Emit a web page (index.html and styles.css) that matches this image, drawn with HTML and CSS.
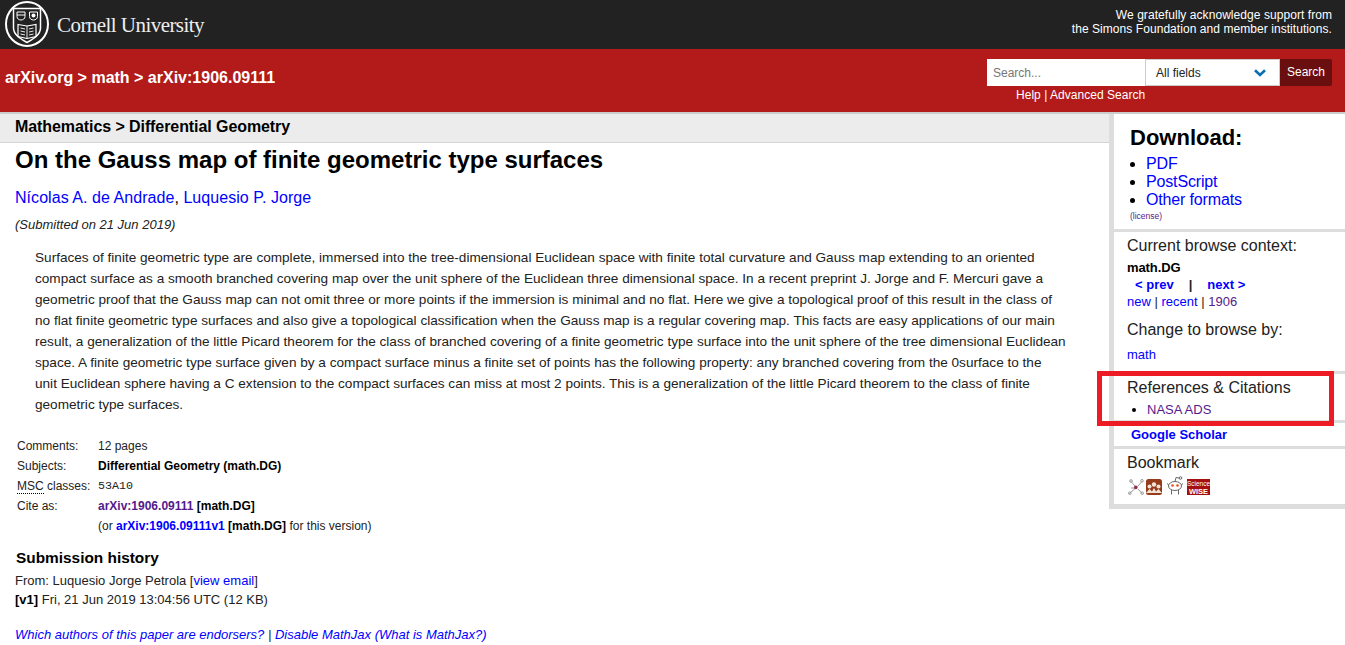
FILE: index.html
```html
<!DOCTYPE html>
<html lang="en">
<head>
<meta charset="utf-8">
<title>On the Gauss map of finite geometric type surfaces</title>
<link rel="stylesheet" href="styles.css">
</head>
<body>
<header class="cu-bar">
  <div class="cu-brand">
    <svg class="seal" width="44" height="46" viewBox="0 0 44 46" fill="none" stroke="#fff">
      <ellipse cx="22" cy="23" rx="21" ry="22" stroke-width="2"/>
      <path d="M8.500 7.500H35.500V27C35.500 34 28 38 22 41.500C16 38 8.500 34 8.500 27Z" stroke-width="1.500"/>
      <path d="M12 11H20V15.500C20 17.800 18 19 16 19C14 19 12 17.800 12 15.500ZM12 14H20" stroke-width="1"/>
      <path d="M24.500 11H32.500V15.500C32.500 17.800 30.500 19 28.500 19C26.500 19 24.500 17.800 24.500 15.500Z" stroke-width="1"/>
      <circle cx="28.500" cy="14.500" r="2" fill="#fff" stroke="none"/>
      <path d="M13 23.500L22 25L31 23.500V35.500L22 37.500L13 35.500Z" stroke-width="1.200"/>
      <path d="M22 25V37.500M15.500 27L20 28M15.500 30L20 31M15.500 33L20 34M24 28L28.500 27M24 31L28.500 30M24 34L28.500 33" stroke-width=".9"/>
    </svg>
    <span class="cu-name">Cornell University</span>
  </div>
  <p class="support">We gratefully acknowledge support from<br>the Simons Foundation and member institutions.</p>
</header>
<div class="red-bar">
  <div class="crumbs">arXiv.org &gt; math &gt; arXiv:1906.09111</div>
  <div class="search">
    <div class="search-row">
      <span class="search-input">Search...</span>
      <span class="search-select">All fields
        <svg class="chev" width="12" height="8" viewBox="0 0 12 8"><path d="M1 1.200L6 6L11 1.200" fill="none" stroke="#0b6fae" stroke-width="2.600"/></svg>
      </span>
      <span class="search-btn">Search</span>
    </div>
    <div class="search-links">Help | Advanced Search</div>
  </div>
</div>
<div class="page">
  <main class="main">
    <div class="subj-head">Mathematics &gt; Differential Geometry</div>
    <h1 class="title">On the Gauss map of finite geometric type surfaces</h1>
    <div class="authors"><a href="#">Nícolas A. de Andrade</a>, <a href="#">Luquesio P. Jorge</a></div>
    <div class="dateline">(Submitted on 21 Jun 2019)</div>
    <blockquote class="abstract">Surfaces of finite geometric type are complete, immersed into the tree-dimensional Euclidean space with finite total curvature and Gauss map extending to an oriented<br>compact surface as a smooth branched covering map over the unit sphere of the Euclidean three dimensional space. In a recent preprint J. Jorge and F. Mercuri gave a<br>geometric proof that the Gauss map can not omit three or more points if the immersion is minimal and no flat. Here we give a topological proof of this result in the class of<br>no flat finite geometric type surfaces and also give a topological classification when the Gauss map is a regular covering map. This facts are easy applications of our main<br>result, a generalization of the little Picard theorem for the class of branched covering of a finite geometric type surface into the unit sphere of the tree dimensional Euclidean<br>space. A finite geometric type surface given by a compact surface minus a finite set of points has the following property: any branched covering from the 0surface to the<br>unit Euclidean sphere having a C extension to the compact surfaces can miss at most 2 points. This is a generalization of the little Picard theorem to the class of finite<br>geometric type surfaces.</blockquote>
    <table class="meta">
      <tr><td class="lbl">Comments:</td><td>12 pages</td></tr>
      <tr><td class="lbl">Subjects:</td><td><b>Differential Geometry (math.DG)</b></td></tr>
      <tr><td class="lbl"><abbr class="msc">MSC</abbr> classes:</td><td class="mono">53A10</td></tr>
      <tr><td class="lbl">Cite as:</td><td><b><a class="visited" href="#">arXiv:1906.09111</a> [math.DG]</b></td></tr>
      <tr><td class="lbl"></td><td>(or <b><a href="#">arXiv:1906.09111v1</a> [math.DG]</b> for this version)</td></tr>
    </table>
    <h2 class="hist-head">Submission history</h2>
    <div class="hist">From: Luquesio Jorge Petrola [<a href="#">view email</a>]<br><b>[v1]</b> Fri, 21 Jun 2019 13:04:56 UTC (12 KB)</div>
    <div class="endorse"><a href="#">Which authors of this paper are endorsers?</a> | <a href="#">Disable MathJax</a> <a href="#">(What is MathJax?)</a></div>
  </main>
  <aside class="side">
    <section class="box dl">
      <h2 class="dl-head">Download:</h2>
      <ul class="dl-list">
        <li><a href="#">PDF</a></li>
        <li><a href="#">PostScript</a></li>
        <li><a href="#">Other formats</a></li>
      </ul>
      <div class="license"><a class="visited" href="#">(license)</a></div>
    </section>
    <section class="box ctx">
      <h3 class="side-h">Current browse context:</h3>
      <div class="ctx-name">math.DG</div>
      <div class="prevnext"><a href="#">&lt; prev</a><span class="sep">|</span><a href="#">next &gt;</a></div>
      <div class="small-links"><a href="#">new</a> | <a href="#">recent</a> | <a class="visited" href="#">1906</a></div>
      <h3 class="side-h change">Change to browse by:</h3>
      <div class="small-links math"><a href="#">math</a></div>
    </section>
    <section class="box refs">
      <h3 class="side-h">References &amp; Citations</h3>
      <ul class="ref-list"><li><a class="visited" href="#">NASA ADS</a></li></ul>
    </section>
    <section class="box scholar"><a href="#">Google Scholar</a></section>
    <section class="box bookmark">
      <h3 class="side-h">Bookmark</h3>
      <div class="marks">
        <svg class="mk-a" width="16" height="16" viewBox="0 0 16 16" fill="none" stroke="#999" stroke-width="1"><path d="M1.500 14.500L7 9.500M9.500 7.500L14 2.500M3 2.500L7 7M10 10L14 14.500M8 9L3 9"/><circle cx="7.800" cy="8.400" r="1.800" fill="#8e2c4c" stroke="none"/><circle cx="3" cy="2" r="1.300"/><circle cx="14" cy="1.800" r="1.300"/><circle cx="1.800" cy="14.200" r="1.300"/><circle cx="14.200" cy="14.200" r="1.300"/></svg>
        <svg class="mk-b" width="16" height="16" viewBox="0 0 16 16"><rect width="16" height="16" rx="2.500" fill="#963a1c"/><circle cx="8" cy="5.500" r="2.200" fill="#f0e4d8"/><circle cx="3.500" cy="7.500" r="2" fill="#f0e4d8"/><circle cx="12.500" cy="7.500" r="2" fill="#f0e4d8"/><path d="M0 14L3.500 10L6 12.500L8 9L10 12.500L12.500 10L16 14Z" fill="#f0e4d8"/></svg>
        <svg class="mk-c" width="18" height="19" viewBox="0 0 18 19" fill="none" stroke="#666" stroke-width="1"><ellipse cx="9" cy="10" rx="6.500" ry="4.500" fill="#fff"/><circle cx="6.500" cy="9.500" r="1.300" fill="#f04a1c" stroke="none"/><circle cx="11.500" cy="9.500" r="1.300" fill="#f04a1c" stroke="none"/><path d="M9 5.500L10 1.500L13.500 2.200M5.500 14V18.500M12.500 14V18.500M2.800 9L1 7.500M15.200 9L17 7.500"/><circle cx="14.500" cy="2" r="1.300"/></svg>
        <span class="wise"><span>Science</span><span class="wise-b">WISE</span></span>
      </div>
    </section>
  </aside>
</div>
<div class="ref-highlight"></div>
</body>
</html>
```

FILE: styles.css
```css
* { box-sizing: border-box; }
html, body { margin: 0; padding: 0; }
body { font-family: "Liberation Sans", Arial, sans-serif; color: #000; background: #fff; width: 1345px; height: 645px; overflow: hidden; position: relative; }
a { color: #00f; text-decoration: none; }
a.visited { color: #551a8b; }

.cu-bar { height: 49px; background: #222; color: #fff; display: flex; justify-content: space-between; }
.cu-brand { display: flex; align-items: center; padding-left: 5px; gap: 8px; height: 48px; }
.cu-name { font-family: "Liberation Serif", serif; font-size: 21px; letter-spacing: -.55px; color: #eee; padding-top: 2px; }
.support { margin: 8px 13px 0 0; font-size: 12px; line-height: 14px; text-align: right; letter-spacing: .06px; }

.red-bar { height: 65px; background: #b31b1b; color: #fff; display: flex; justify-content: space-between; border-bottom: 2px solid #ccc; }
.crumbs { font-size: 16px; font-weight: 700; padding: 20px 0 0 5px; line-height: 18px; }
.search { padding: 10px 13px 0 0; font-size: 12px; }
.search-row { display: flex; height: 27px; }
.search-input { width: 158px; background: #fff; color: #777; padding-left: 6px; line-height: 28px; }
.search-select { width: 135px; background: #fff; color: #222; border: 1px solid #ccc; padding-left: 10px; line-height: 26px; position: relative; }
.chev { position: absolute; right: 13px; top: 9px; }
.search-btn { width: 52px; background: #6a0f0f; color: #fff; text-align: center; line-height: 27px; border-radius: 0 2px 2px 0; }
.search-links { padding-left: 29px; line-height: 14px; margin-top: 2px; letter-spacing: .03px; }

.page { display: flex; height: 531px; }
.main { width: 1109px; padding-left: 15px; padding-right: 16px; }
.subj-head { margin-left: -15px; padding-left: 15px; background: #ececec; border-bottom: 1px solid #d4d4d4; height: 29px; line-height: 25px; font-size: 16px; letter-spacing: -.08px; font-weight: 700; margin-right: -16px; }
.title { margin: 4px 0 0; font-size: 24px; line-height: 26px; font-weight: 700; }
.authors { margin-top: 16px; font-size: 16px; line-height: 18px; letter-spacing: .05px; }
.dateline { margin-top: 11px; font-size: 13px; line-height: 14px; font-style: italic; color: #222; }
.abstract { margin: 15px 0 0 20px; font-size: 13.600px; line-height: 21px; white-space: nowrap; color: #222; }

.meta { margin-top: 21px; margin-left: 2px; font-size: 12px; border-collapse: collapse; }
.meta td { padding: 0; height: 20px; line-height: 20px; white-space: nowrap; color: #222; }
.meta b { color: #000; }
.lbl { width: 81px; }
.msc { border-bottom: 1px dotted #000; }
.mono { font-family: "Liberation Mono", monospace; font-size: 11.700px; color: #555; }
.hist-head { margin: 14px 0 0 1px; font-size: 15.400px; line-height: 16px; font-weight: 700; }
.hist { margin-top: 5px; font-size: 13px; line-height: 19px; color: #222; }
.hist b { color: #000; }
.endorse { margin-top: 19px; font-size: 13px; line-height: 14px; font-style: italic; color: #222; }

.side { width: 236px; border-left: 5px solid #ddd; display: flex; flex-direction: column; align-self: flex-start; border-bottom: 5px solid #ddd; }
.box { border-bottom: 3px solid #ddd; padding-left: 15px; }
.box:last-child { border-bottom: 0; }
.dl { height: 118px; padding-left: 16px; }
.dl-head { margin: 11px 0 0; font-size: 22px; line-height: 25px; font-weight: 700; }
.dl-list { margin: 5px 0 0; padding-left: 16px; font-size: 16px; line-height: 18px; letter-spacing: -.15px; }
.license { font-size: 8.500px; line-height: 10px; margin-top: 2px; }
.ctx { height: 142px; padding-left: 13px; }
.side-h { margin: 0; font-size: 16px; font-weight: 400; line-height: 18px; color: #222; }
.ctx .side-h:first-child { margin-top: 5px; }
.ctx-name { margin-top: 6px; font-size: 13px; font-weight: 700; line-height: 14px; letter-spacing: -.1px; }
.prevnext { margin-top: 3px; padding-left: 8px; font-size: 13px; font-weight: 700; line-height: 14px; }
.sep { margin: 0 15px; color: #222; }
.small-links { margin-top: 3px; font-size: 13px; line-height: 14px; color: #222; }
.change { margin-top: 12px; }
.math { margin-top: 9px; }
.refs { height: 49px; padding-left: 13px; }
.refs .side-h { margin-top: 5px; }
.ref-list { margin: 6px 0 0; padding-left: 20px; font-size: 13px; line-height: 14px; }
.scholar { height: 26px; padding-left: 17px; font-size: 13px; font-weight: 700; line-height: 23px; }
.bookmark { height: 55px; padding-left: 13px; }
.bookmark .side-h { margin-top: 5px; }
.marks { display: flex; align-items: flex-end; margin-top: 4px; height: 19px; }
.mk-a { margin-left: 1px; }
.mk-b { margin-left: 2px; }
.mk-c { margin-left: 4px; }
.wise { width: 23px; height: 16px; margin-left: 3px; background: #a50f0f; color: #fff; display: flex; flex-direction: column; align-items: center; font-size: 6.500px; line-height: 7.500px; padding-top: 1px; }
.wise-b { font-weight: 700; font-size: 7.500px; }

.ref-highlight { position: absolute; left: 1097px; top: 371px; width: 237px; height: 55px; border: 5px solid #ed1c24; pointer-events: none; }
```
